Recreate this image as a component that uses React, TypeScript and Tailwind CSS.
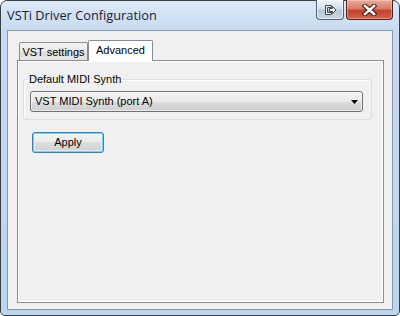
import React from "react";

function DockButton() {
  return (
    <div className="flex h-[20px] w-[28px] items-center justify-center rounded-b-[4px] border border-t-0 border-[#56606e] bg-[linear-gradient(to_bottom,#eef3f9,#d5e0ec_45%,#b9c8d9_55%,#c9d6e4)] shadow-[inset_0_0_0_1px_rgba(255,255,255,0.55)]">
      <svg width="13" height="10" viewBox="0 0 13 10">
        <path d="M1.5 0.5h6v2h-4v5h4v2h-6z" fill="#f4f6f8" stroke="#3c4550" strokeWidth="1" />
        <path d="M5.5 3.5h3v-2l3.5 3.5-3.5 3.5v-2h-3z" fill="#f4f6f8" stroke="#3c4550" strokeWidth="1" />
      </svg>
    </div>
  );
}

function CloseButton() {
  return (
    <div className="flex h-[20px] w-[47px] items-center justify-center rounded-b-[4px] border border-t-0 border-[#47241f] bg-[linear-gradient(to_bottom,#ebab9d,#db7b68_45%,#c4422e_55%,#d2604a)] shadow-[inset_0_0_0_1px_rgba(255,220,210,0.45)]">
      <svg width="15" height="12" viewBox="0 0 15 12">
        <path d="M3 2l9 8M12 2l-9 8" stroke="#3b1a16" strokeWidth="4.6" strokeLinecap="square" />
        <path d="M3 2l9 8M12 2l-9 8" stroke="#ffffff" strokeWidth="2.6" strokeLinecap="square" />
      </svg>
    </div>
  );
}

export default function App() {
  return (
    <div className="h-[316px] w-[400px] bg-white font-['Liberation_Sans',Arial,sans-serif] text-[11px] text-black">
      <div className="flex h-full flex-col rounded-t-[7px] rounded-b-[5px] border border-[#3a3e45] bg-[linear-gradient(to_bottom,#dce9f7,#c6daf0_30px,#bdd5ef)] px-[6px] pb-[5px]">
        {/* title bar */}
        <div className="flex h-[29px] shrink-0 items-start justify-between">
          <div className="pt-[5px] font-['Open_Sans',sans-serif] text-[12.8px] leading-[18px] text-[#1a1a36]">
            VSTi Driver Configuration
          </div>
          <div className="-mt-px flex gap-[2px]">
            <DockButton />
            <CloseButton />
          </div>
        </div>

        {/* client area */}
        <div className="flex flex-1 flex-col border border-[#8a97a5] bg-[#f0f0f0] pt-[9px] pl-[9px] pr-[8px] pb-[6px]">
          {/* tabs */}
          <div className="relative z-10 flex h-[21px] items-end pl-[2px]">
            <div className="mb-px flex h-[18px] w-[69px] items-center justify-center rounded-t-[2px] border border-b-0 border-[#898c95] bg-[linear-gradient(to_bottom,#f3f3f3,#ebebeb_50%,#dddddd_50%,#e6e6e6)] pt-px">
              VST settings
            </div>
            <div className="flex h-[21px] w-[65px] items-center justify-center rounded-t-[2px] border border-b-0 border-[#898c95] bg-white pb-[2px]">
              Advanced
            </div>
          </div>

          {/* tab page */}
          <div className="-mt-px flex flex-1 flex-col border border-[#898c95] bg-[#f0f0f0] shadow-[inset_1px_1px_0_#ffffff,inset_-1px_-1px_0_#ffffff]">
            <fieldset className="mt-[12px] ml-[5px] mr-[11px] rounded-[3px] border border-[#d5dfe5] pl-[6px] pr-[8px] pt-[5px] pb-[7px] shadow-[inset_1px_1px_0_#ffffff]">
              <legend className="-ml-[2px] px-[1px] leading-[13px]">Default MIDI Synth</legend>
              <div className="flex h-[21px] items-center justify-between rounded-[3px] border border-[#707070] bg-[linear-gradient(to_bottom,#f2f2f2,#ebebeb_50%,#dddddd_50%,#cfcfcf)] pl-[4px] pr-[4px] shadow-[inset_0_0_0_1px_rgba(255,255,255,0.6)]">
                <span>VST MIDI Synth (port A)</span>
                <svg width="7" height="4" viewBox="0 0 7 4">
                  <path d="M0 0h7L3.5 4z" fill="#000000" />
                </svg>
              </div>
            </fieldset>

            <button
              type="button"
              className="mt-[12px] ml-[14px] flex h-[21px] w-[72px] items-center justify-center rounded-[3px] border border-[#3c7fb1] bg-[linear-gradient(to_bottom,#f2f2f2,#ebebeb_50%,#dddddd_50%,#cfcfcf)] shadow-[inset_0_0_0_1px_#6fd3f5,inset_0_0_0_2px_rgba(255,255,255,0.5)]"
            >
              Apply
            </button>
          </div>
        </div>
      </div>
    </div>
  );
}
